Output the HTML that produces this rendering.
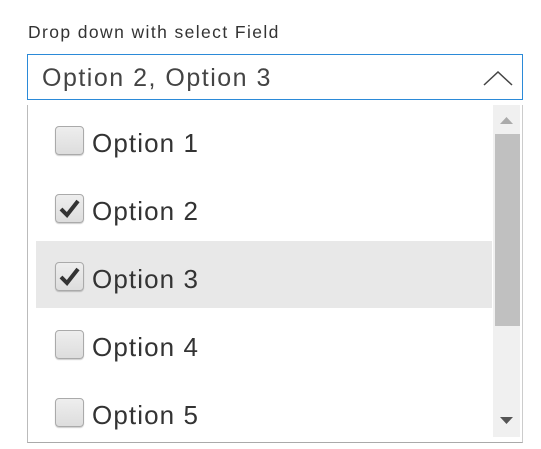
<!DOCTYPE html>
<html><head><style>
body{margin:0;width:541px;height:447px;background:#fff;font-family:"Liberation Sans",sans-serif;position:relative;overflow:hidden;color:#333}
.lbl{position:absolute;left:28px;top:22px;font-size:17.5px;letter-spacing:1.4px;color:#333}
.inp{position:absolute;left:27px;top:54px;width:494px;height:44px;border:1px solid #2b8ad8}
.inp span{position:absolute;left:14px;top:9px;font-size:25px;letter-spacing:1.5px;color:#444}
.panel{position:absolute;left:27px;top:105px;width:494px;height:337px;border-left:1px solid #bbb;border-right:1px solid #ccc;border-bottom:1px solid #aaa}
.row{position:absolute;left:8px;width:456px;height:68px}
.row.h{background:#e8e8e8}
.cb{position:absolute;left:19px;top:17px;width:27px;height:27px;border:1px solid #aaa;border-radius:4px;background:linear-gradient(#eee,#ddd);box-shadow:0 1px 1px rgba(0,0,0,.2)}
.cb svg{position:absolute;left:2px;top:2px}
.t{position:absolute;left:56px;top:19px;font-size:26px;letter-spacing:1.1px;color:#333}
.sb{position:absolute;left:465px;top:0;width:27px;height:332px;background:#f0f0f0}
.thumb{position:absolute;left:2px;top:29px;width:25px;height:192px;background:#c0c0c0}
</style></head><body>
<div class="lbl">Drop down with select Field</div>
<div class="inp"><span>Option 2, Option 3</span>
<svg style="position:absolute;left:455px;top:16px" width="30" height="15"><path d="M1 14 L15 1 L29 14" fill="none" stroke="#444" stroke-width="1.5"/></svg></div>
<div class="panel">
<div class="row" style="top:4px"><div class="cb"></div><div class="t">Option 1</div></div>
<div class="row" style="top:72px"><div class="cb"><svg width="23" height="23"><path d="M3 12 L9 18 L20 4" fill="none" stroke="#333" stroke-width="4"/></svg></div><div class="t">Option 2</div></div>
<div class="row h" style="top:136px;height:67px"><div class="cb" style="top:21px"><svg width="23" height="23"><path d="M3 12 L9 18 L20 4" fill="none" stroke="#333" stroke-width="4"/></svg></div><div class="t" style="top:23px">Option 3</div></div>
<div class="row" style="top:208px"><div class="cb"></div><div class="t">Option 4</div></div>
<div class="row" style="top:276px"><div class="cb"></div><div class="t">Option 5</div></div>
<div class="sb">
<svg style="position:absolute;left:7px;top:11px" width="13" height="8"><path d="M0 8 L6.5 1 L13 8Z" fill="#aaa"/></svg>
<div class="thumb"></div>
<svg style="position:absolute;left:7px;top:312px" width="13" height="8"><path d="M0 0 L6.5 7 L13 0Z" fill="#555"/></svg>
</div>
</div>
</body></html>
